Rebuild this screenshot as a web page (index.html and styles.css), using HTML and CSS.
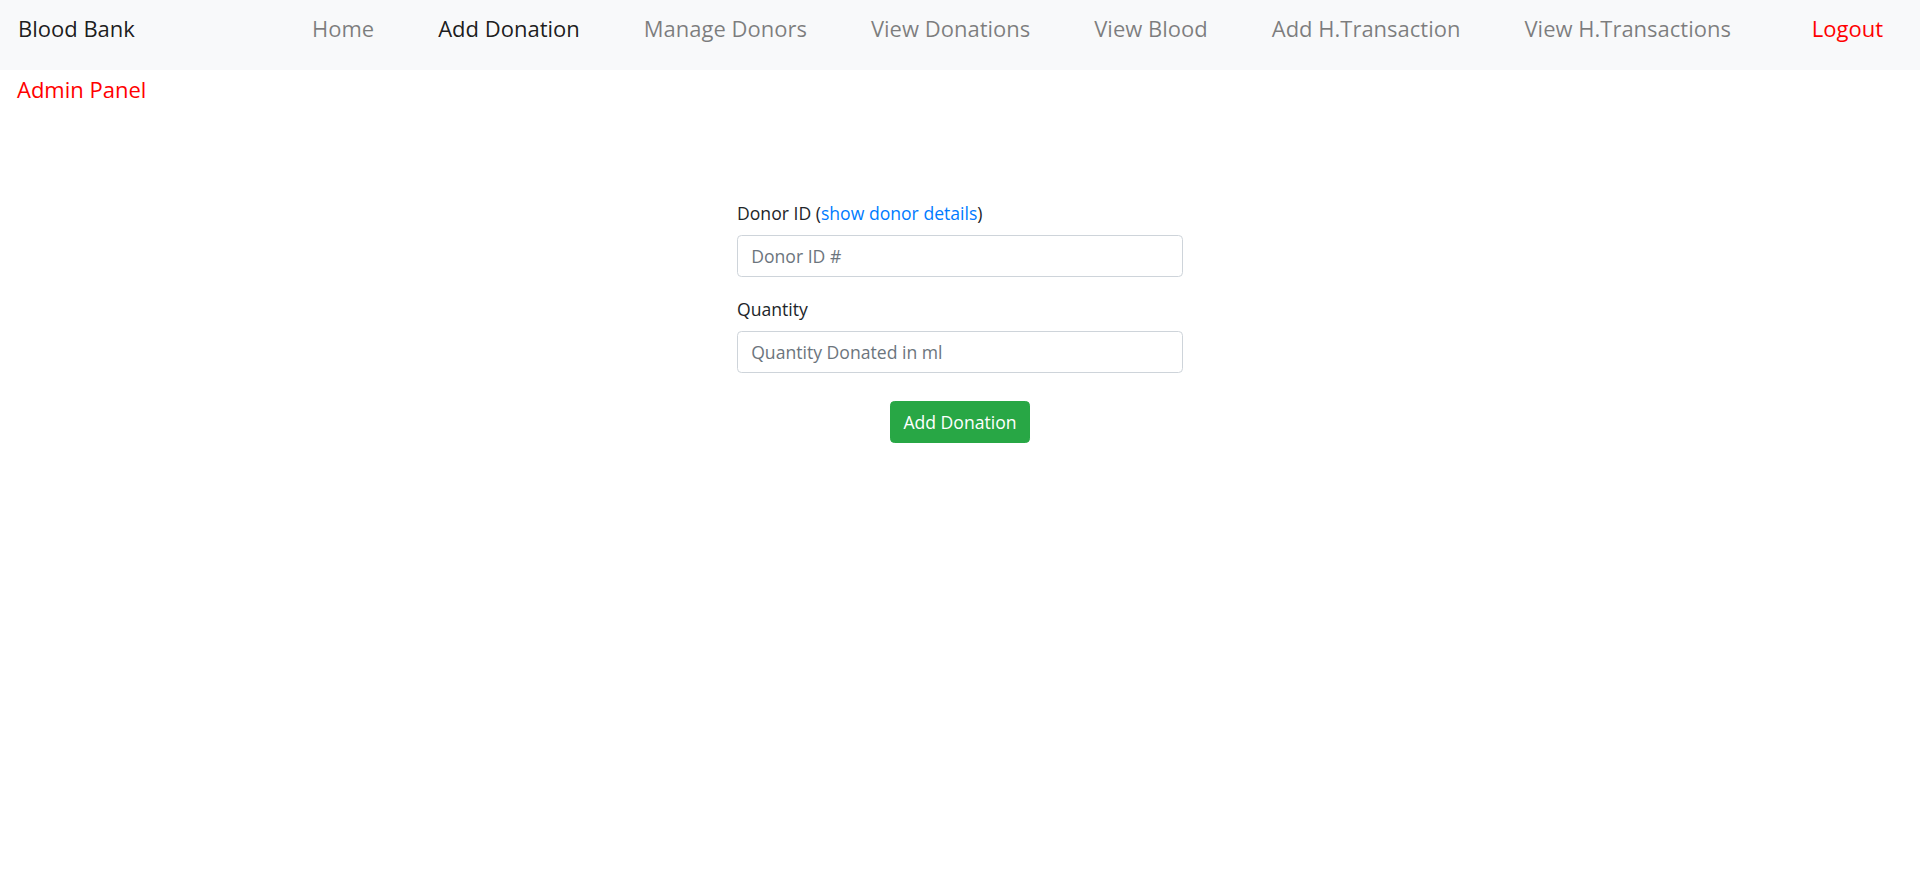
FILE: index.html
```html
<!DOCTYPE html>
<html lang="en">
<head>
<meta charset="utf-8">
<title>Blood Bank - Add Donation</title>
<link rel="stylesheet" href="styles.css">
</head>
<body>
<nav class="navbar">
  <a class="brand" href="#">Blood Bank</a>
  <ul class="nav-links">
    <li><a class="nav-link" href="#">Home</a></li>
    <li><a class="nav-link active" href="#">Add Donation</a></li>
    <li><a class="nav-link" href="#">Manage Donors</a></li>
    <li><a class="nav-link" href="#">View Donations</a></li>
    <li><a class="nav-link" href="#">View Blood</a></li>
    <li><a class="nav-link" href="#">Add H.Transaction</a></li>
    <li><a class="nav-link" href="#">View H.Transactions</a></li>
  </ul>
  <a class="logout" href="#">Logout</a>
</nav>
<div class="panel-title">Admin Panel</div>
<main class="content">
  <form class="donation-form">
    <div class="form-group">
      <label class="form-label" for="donor">Donor ID (<a class="link" href="#">show donor details</a>)</label>
      <input class="form-control" id="donor" type="text" placeholder="Donor ID #">
    </div>
    <div class="form-group">
      <label class="form-label" for="qty">Quantity</label>
      <input class="form-control" id="qty" type="text" placeholder="Quantity Donated in ml">
    </div>
    <div class="actions">
      <button class="btn-success" type="button">Add Donation</button>
    </div>
  </form>
</main>
</body>
</html>
```
FILE: styles.css
```css
* { box-sizing: border-box; }
html { font-size: 17.6px; }
body {
  margin: 0;
  font-family: "Open Sans", "Noto Sans", sans-serif;
  font-size: 17.6px;
  line-height: 1.5;
  color: #212529;
  background: #fff;
}
a { text-decoration: none; }

.navbar {
  display: flex;
  align-items: flex-start;
  height: 70px;
  background: #f8f9fa;
  padding: 12px 37px 0 18px;
}
.brand {
  flex: 0 0 262px;
  font-size: 22px;
  line-height: 1.5;
  color: rgba(0,0,0,0.9);
}
.nav-links {
  display: flex;
  list-style: none;
  margin: 0;
  padding: 0;
}
.nav-link {
  display: block;
  padding: 0 32px;
  font-size: 22px;
  line-height: 1.5;
  color: rgba(0,0,0,0.5);
}
.nav-link.active { color: rgba(0,0,0,0.9); }
.logout {
  margin-left: auto;
  font-size: 22px;
  line-height: 1.5;
  color: #ff0000;
}

.panel-title {
  padding: 3px 17px 0;
  font-size: 22px;
  line-height: 1.5;
  color: #ff0000;
}

.content {
  display: flex;
  justify-content: center;
  padding-top: 94px;
}
.donation-form { width: 446px; }
.form-group { margin-bottom: 19px; }
.form-label {
  display: block;
  margin-bottom: 8.8px;
  font-size: 17.6px;
}
.link { color: #007bff; }
.form-control {
  display: block;
  width: 100%;
  height: 42px;
  padding: 6.6px 13.2px;
  font-family: inherit;
  font-size: 17.6px;
  color: #495057;
  background: #fff;
  border: 1px solid #ced4da;
  border-radius: 4.4px;
}
.form-control::placeholder { color: #6c757d; }
.actions {
  display: flex;
  justify-content: center;
  padding-top: 9px;
}
.btn-success {
  height: 42px;
  padding: 0 12px;
  font-family: inherit;
  font-size: 17.6px;
  color: #fff;
  background: #28a745;
  border: 1px solid #28a745;
  border-radius: 4.4px;
}
```
